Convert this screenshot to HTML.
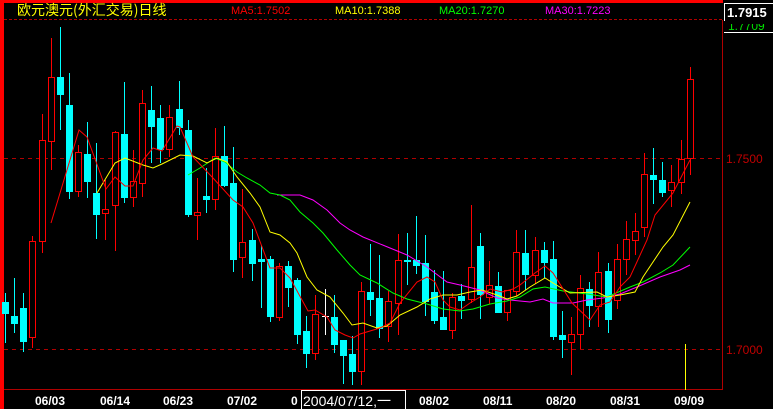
<!DOCTYPE html>
<html><head><meta charset="utf-8"><style>
html,body{margin:0;padding:0;background:#000;width:773px;height:409px;overflow:hidden}
svg{display:block}
</style></head><body>
<svg width="773" height="409" xmlns="http://www.w3.org/2000/svg" font-family="Liberation Sans, sans-serif">
<rect width="773" height="409" fill="#000"/>
<rect x="0" y="0" width="723" height="3" fill="#f00"/>
<rect x="0" y="0" width="4" height="409" fill="#f00"/>
<line x1="4" y1="19.5" x2="723" y2="19.5" stroke="#b00000" stroke-dasharray="3,2"/>
<line x1="722.5" y1="20" x2="722.5" y2="390" stroke="#b00000"/>
<line x1="4" y1="389.5" x2="723" y2="389.5" stroke="#b00000"/>
<line x1="4" y1="158.5" x2="722" y2="158.5" stroke="#b00000" stroke-dasharray="4,4"/>
<line x1="4" y1="349.5" x2="722" y2="349.5" stroke="#b00000" stroke-dasharray="4,4"/>
<text x="726" y="163" fill="#c00000" font-size="12">1.7500</text>
<text x="726" y="354" fill="#c00000" font-size="12">1.7000</text>
<rect x="724.5" y="3.5" width="50" height="18" fill="#000" stroke="#fff"/>
<text x="727" y="17" fill="#fff" font-size="13" font-weight="bold">1.7915</text>
<text x="728" y="30" fill="#00e000" font-size="12">1.7709</text>
<rect x="724" y="21" width="49" height="3" fill="#000"/>
<line x1="724" y1="32.5" x2="773" y2="32.5" stroke="#fff"/>
<text x="17" y="15" fill="#ffff00" font-size="14" font-family="WenQuanYi Zen Hei, Noto Sans CJK SC, sans-serif">欧元澳元(外汇交易)日线</text>
<text x="231" y="14" fill="#f00" font-size="11">MA5:1.7502</text>
<text x="335" y="14" fill="#ff0" font-size="11">MA10:1.7388</text>
<text x="439" y="14" fill="#0f0" font-size="11">MA20:1.7270</text>
<text x="545" y="14" fill="#f0f" font-size="11">MA30:1.7223</text>
<g shape-rendering="crispEdges">
<path fill="none" stroke="#0ff" d="M5.5 293V343M14.5 278V333M23.5 293V352M60.5 27V130M69.5 73V199M87.5 122V198M96.5 143V239M124.5 82V203M151.5 86V163M160.5 105V163M179.5 81V135M188.5 120V217M206.5 168V213M224.5 126V187M233.5 147V272M252.5 229V281M261.5 245V308M270.5 256V322M288.5 261V307M297.5 278V344M306.5 316V368M334.5 295V353M343.5 340V384M352.5 336V385M370.5 244V316M379.5 255V338M407.5 233V285M416.5 216V274M425.5 235V316M434.5 270V324M443.5 271V330M461.5 284V319M480.5 233V319M498.5 272V312M525.5 230V290M544.5 242V278M553.5 241V340M562.5 311V358M589.5 282V327M608.5 263V333M653.5 148V204M662.5 162V197"/>
<path fill="#0ff" d="M2 302h7v12h-7zM11 316h7v8h-7zM20 308h7v34h-7zM57 77h7v18h-7zM66 105h7v87h-7zM84 154h7v28h-7zM93 193h7v22h-7zM121 134h7v64h-7zM148 110h7v17h-7zM157 118h7v32h-7zM176 109h7v19h-7zM185 130h7v85h-7zM203 196h7v4h-7zM221 156h7v30h-7zM230 183h7v77h-7zM249 240h7v24h-7zM258 259h7v3h-7zM267 259h7v58h-7zM285 266h7v22h-7zM294 280h7v55h-7zM303 331h7v23h-7zM331 317h7v28h-7zM340 340h7v16h-7zM349 354h7v18h-7zM367 292h7v8h-7zM376 298h7v31h-7zM404 260h7v2h-7zM413 260h7v6h-7zM422 263h7v39h-7zM431 292h7v29h-7zM440 317h7v13h-7zM458 296h7v5h-7zM477 246h7v49h-7zM495 286h7v27h-7zM522 253h7v22h-7zM541 250h7v13h-7zM550 259h7v78h-7zM559 335h7v5h-7zM586 289h7v17h-7zM605 271h7v49h-7zM650 175h7v5h-7zM659 180h7v13h-7z"/>
<path fill="none" stroke="#f00" d="M32.5 236V348M42.5 114V253M51.5 38V170M78.5 145V197M105.5 180V240M115.5 131V251M133.5 150V207M142.5 90V197M169.5 105V157M197.5 178V240M215.5 128V210M242.5 189V278M279.5 263V321M315.5 295V360M361.5 282V385M388.5 291V342M398.5 234V335M452.5 293V339M471.5 205V303M489.5 261V304M507.5 290V321M516.5 230V296M535.5 237V284M571.5 317V375M580.5 275V349M598.5 252V327M617.5 244V309M626.5 221V275M635.5 213V255M644.5 153V237M671.5 165V207M681.5 140V194M690.5 67V175"/>
<path fill="#000" stroke="#f00" d="M29.5 241.5h6v96h-6zM39.5 140.5h6v101h-6zM48.5 77.5h6v64h-6zM75.5 152.5h6v39h-6zM102.5 209.5h6v4h-6zM112.5 132.5h6v73h-6zM130.5 181.5h6v16h-6zM139.5 103.5h6v80h-6zM166.5 117.5h6v32h-6zM194.5 212.5h6v3h-6zM212.5 156.5h6v43h-6zM239.5 242.5h6v15h-6zM276.5 266.5h6v51h-6zM312.5 314.5h6v39h-6zM358.5 291.5h6v80h-6zM385.5 301.5h6v25h-6zM395.5 260.5h6v43h-6zM449.5 297.5h6v33h-6zM468.5 267.5h6v32h-6zM486.5 285.5h6v12h-6zM504.5 290.5h6v22h-6zM513.5 252.5h6v39h-6zM532.5 250.5h6v25h-6zM568.5 334.5h6v8h-6zM577.5 288.5h6v46h-6zM595.5 272.5h6v34h-6zM614.5 259.5h6v41h-6zM623.5 239.5h6v20h-6zM632.5 231.5h6v9h-6zM641.5 174.5h6v53h-6zM668.5 182.5h6v8h-6zM678.5 159.5h6v23h-6zM687.5 79.5h6v79h-6z"/>
<path fill="none" stroke="#fff" d="M325.5 289V335M322 316.5h7"/>
</g>
<polyline fill="none" stroke="#ff00ff" points="277,195 300,195 313,200 327,210 340,223 350,230 363,237 390,248 407,255 427,267 447,282 460,285 480,290 497,298 510,300 530,302 543,299 553,303 573,303 587,300 603,298 620,294 637,287 660,277 680,270 690,265"/>
<polyline fill="none" stroke="#00ff00" points="188,175 200,168 215,158 225,162 237,172 247,178 260,185 270,193 280,195 290,200 300,212 313,223 323,233 337,250 350,265 360,275 377,283 393,293 407,299 427,304 443,309 460,311 473,309 490,304 507,301 520,297 533,289 545,287 563,291 587,294 607,297 630,287 643,282 660,273 673,265 690,247"/>
<polyline fill="none" stroke="#ffff00" points="97,193 115,163 125,158 143,165 153,168 162,164 180,155 193,156 207,163 217,158 227,162 237,177 250,193 260,207 270,232 280,235 290,243 297,253 307,277 317,290 330,297 343,313 352,325 363,323 377,328 387,326 400,315 417,307 430,299 443,295 457,295 470,292 482,290 497,295 507,299 517,296 530,287 545,278 553,283 570,293 597,292 607,297 620,295 635,292 643,277 663,247 673,235 690,202"/>
<polyline fill="none" stroke="#ff0000" points="51,223 79,130 87,137 106,189 115,177 125,186 133,186 143,160 153,148 162,151 177,126 180,127 193,157 213,178 233,200 243,207 253,223 270,268 280,268 290,278 308,311 315,310 327,317 335,330 345,335 353,338 360,334 380,328 390,323 400,303 417,282 427,277 435,282 443,300 450,307 460,310 470,303 480,297 490,289 502,292 513,289 520,285 535,273 545,266 553,273 572,303 590,320 600,305 610,302 620,287 630,277 647,240 655,215 673,193 690,160"/>
<rect x="685" y="344" width="1" height="46" fill="#ffff00"/>
<g font-size="12" font-weight="bold" fill="#fff">
<text x="35" y="405">06/03</text><text x="100" y="405">06/14</text><text x="163" y="405">06/23</text><text x="227" y="405">07/02</text><text x="291" y="405">0</text>
<text x="419" y="405">08/02</text><text x="483" y="405">08/11</text><text x="546" y="405">08/20</text><text x="610" y="405">08/31</text><text x="674" y="405">09/09</text>
</g>
<rect x="301.5" y="390.5" width="104" height="20" fill="#000" stroke="#fff"/>
<text x="303" y="406" fill="#fff" font-size="14" font-family="Liberation Sans, WenQuanYi Zen Hei, sans-serif">2004/07/12,一</text>
</svg>
</body></html>
